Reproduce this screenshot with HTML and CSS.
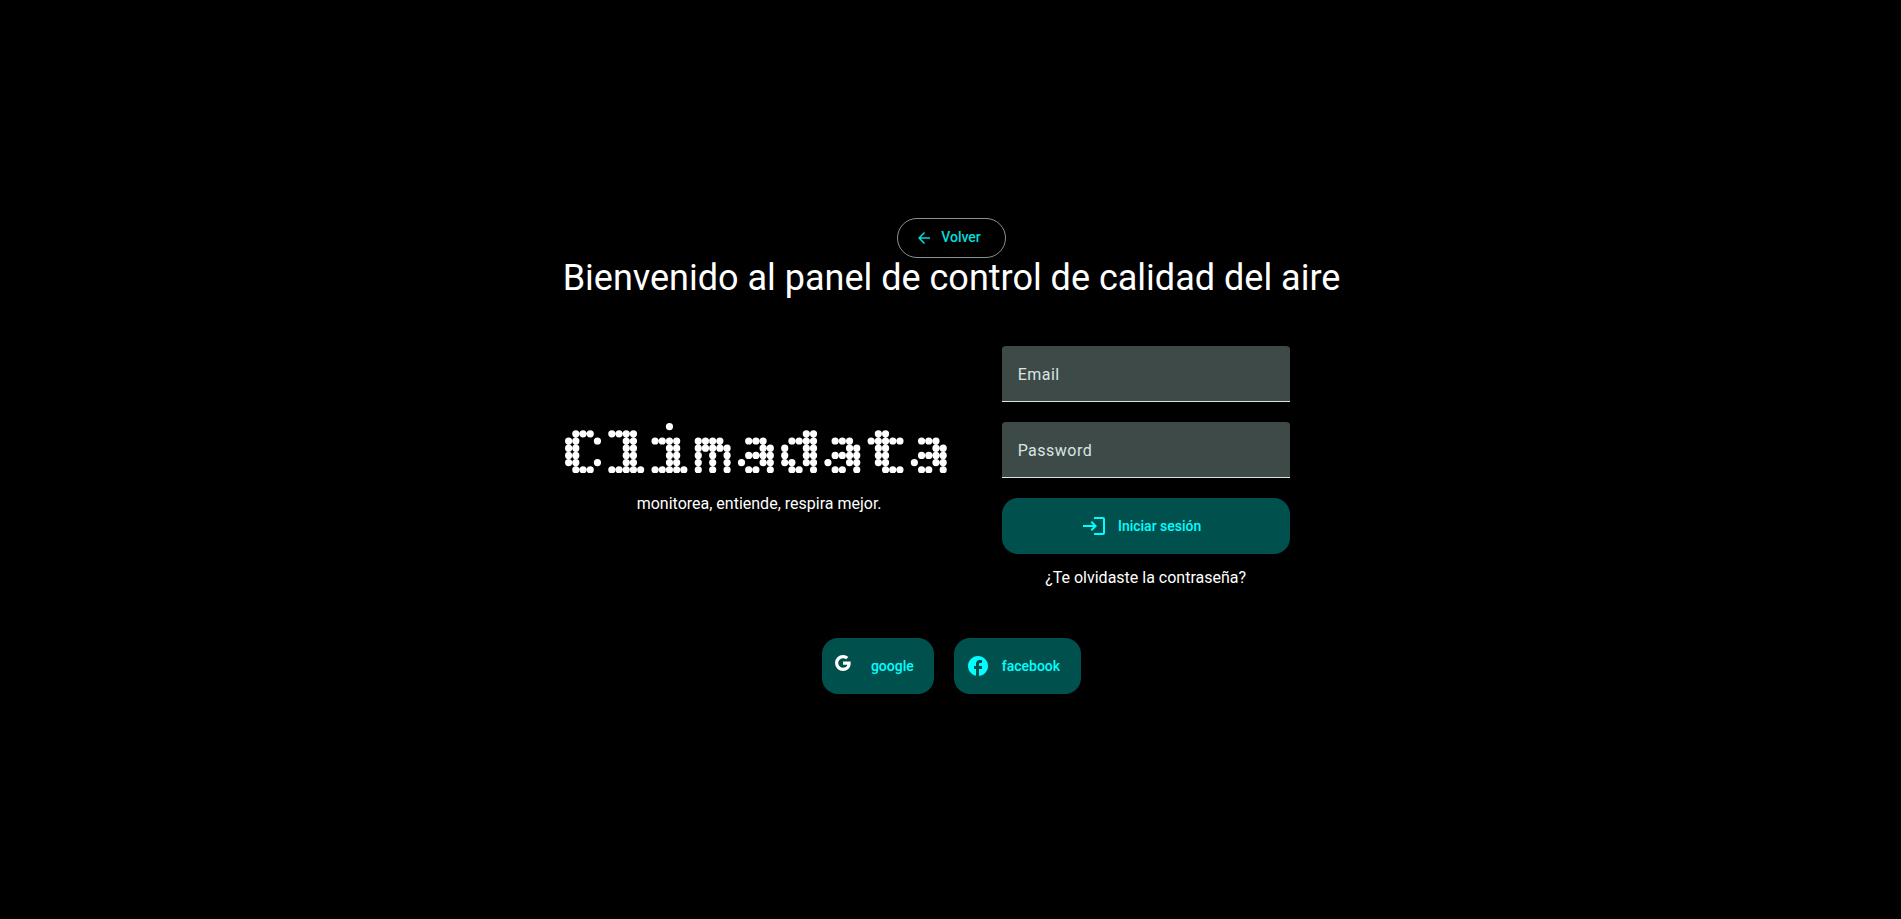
FILE: index.html
```html
<!DOCTYPE html>
<html lang="es">
<head>
<meta charset="utf-8">
<meta name="viewport" content="width=device-width, initial-scale=1">
<title>Climadata</title>
<link rel="stylesheet" href="styles.css">
</head>
<body>
<main class="login">
  <button class="back" type="button">
    <svg class="back-icon" viewBox="0 0 24 24" aria-hidden="true"><path d="M20 11H7.83l5.59-5.59L12 4l-8 8 8 8 1.41-1.41L7.83 13H20v-2z"/></svg>
    Volver
  </button>
  <div class="panel">
    <h1 class="title">Bienvenido al panel de control de calidad del aire</h1>
    <div class="columns">
      <section class="brand">
        <!-- Dot-matrix wordmark: one unit per dot, six columns per letter -->
        <svg class="logo" viewBox="0 0 54 7" role="img" aria-label="Climadata">
          <defs>
            <path id="dot-a" d="M1 2h0m1 0h0m1 0h0M3 3h0m1 0h0M1 4h0m1 0h0m1 0h0m1 0h0M0 5h0m3 0h0m1 0h0M1 6h0m1 0h0m2 0h0"/>
          </defs>
          <g class="dots" transform="translate(.5 .5)">
            <path d="M1 1h0m1 0h0m1 0h0M0 2h0m1 0h0m3 0h0M0 3h0m1 0h0M0 4h0m1 0h0M0 5h0m1 0h0m3 0h0M1 6h0m1 0h0m1 0h0"/>
            <path transform="translate(6)" d="M0 1h0m1 0h0m1 0h0m1 0h0M2 2h0m1 0h0M2 3h0m1 0h0M2 4h0m1 0h0M2 5h0m1 0h0M0 6h0m1 0h0m1 0h0m1 0h0m1 0h0"/>
            <path transform="translate(12)" d="M2 0h0M0 2h0m1 0h0m1 0h0m1 0h0M2 3h0m1 0h0M2 4h0m1 0h0M2 5h0m1 0h0M0 6h0m1 0h0m1 0h0m1 0h0m1 0h0"/>
            <path transform="translate(18)" d="M0 2h0m1 0h0m1 0h0m1 0h0M0 3h0m1 0h0m1 0h0m1 0h0m1 0h0M0 4h0m2 0h0m2 0h0M0 5h0m2 0h0m2 0h0M0 6h0m2 0h0m2 0h0"/>
            <use href="#dot-a" x="24"/>
            <path transform="translate(30)" d="M3 1h0m1 0h0M1 2h0m1 0h0m1 0h0m1 0h0M0 3h0m3 0h0m1 0h0M0 4h0m3 0h0m1 0h0M0 5h0m1 0h0m2 0h0m1 0h0M1 6h0m1 0h0m2 0h0"/>
            <use href="#dot-a" x="36"/>
            <path transform="translate(42)" d="M1 1h0m1 0h0M0 2h0m1 0h0m1 0h0m1 0h0m1 0h0M1 3h0m1 0h0M1 4h0m1 0h0M1 5h0m1 0h0M2 6h0m1 0h0m1 0h0"/>
            <use href="#dot-a" x="48"/>
          </g>
        </svg>
        <p class="tagline">monitorea, entiende, respira mejor.</p>
      </section>
      <form class="form">
        <div class="field">
          <input class="input" id="email" type="email">
          <label class="label" for="email">Email</label>
        </div>
        <div class="field">
          <input class="input" id="password" type="password">
          <label class="label" for="password">Password</label>
        </div>
        <button class="action submit" type="submit">
          <svg class="icon" viewBox="0 0 24 24" aria-hidden="true"><path d="M10 7 8.600 8.400 11.200 11H1v2h10.200l-2.600 2.600L10 17l5-5-5-5zm11 12h-9v2h9c1.100 0 2-.9 2-2V5c0-1.100-.9-2-2-2h-9v2h9v14z"/></svg>
          Iniciar sesión
        </button>
        <a class="forgot" href="#">¿Te olvidaste la contraseña?</a>
      </form>
    </div>
  </div>
  <div class="social">
    <button class="action google" type="button">
      <svg class="google-icon" viewBox="0 0 16 16" aria-hidden="true"><path d="M15.545 6.558a9.420 9.420 0 0 1 .139 1.626c0 2.434-.87 4.492-2.384 5.885h.002C11.978 15.292 10.158 16 8 16A8 8 0 1 1 8 0a7.689 7.689 0 0 1 5.352 2.082l-2.284 2.284A4.347 4.347 0 0 0 8 3.166c-2.087 0-3.860 1.408-4.492 3.304a4.792 4.792 0 0 0 0 3.063h.003c.635 1.893 2.405 3.301 4.492 3.301 1.078 0 2.004-.276 2.722-.764h-.003a3.702 3.702 0 0 0 1.599-2.431H8v-3.080h7.545z"/></svg>
      google
    </button>
    <button class="action" type="button">
      <svg class="icon" viewBox="0 0 24 24" aria-hidden="true"><path d="M22 12c0-5.520-4.480-10-10-10S2 6.480 2 12c0 4.840 3.440 8.870 8 9.800V15H8v-3h2V9.500C10 7.570 11.570 6 13.500 6H16v3h-2c-.55 0-1 .45-1 1v2h3v3h-3v6.950c5.050-.5 9-4.760 9-9.950z"/></svg>
      facebook
    </button>
  </div>
</main>
</body>
</html>
```
FILE: styles.css
```css
* {
  box-sizing: border-box;
}

body {
  margin: 0;
  background: #000;
  color: #fff;
  font: 400 16px/24px Roboto, sans-serif;
}

.login {
  min-height: 100vh;
  padding: 0 0 7px 2px;
  display: flex;
  flex-direction: column;
  align-items: center;
  justify-content: center;
}

button {
  font: 500 14px/20px Roboto, sans-serif;
  cursor: pointer;
}

.back {
  display: flex;
  align-items: center;
  gap: 8px;
  height: 40px;
  padding: 0 24px 2px 17px;
  border: 1px solid #889391;
  border-radius: 20px;
  background: transparent;
  color: #00dddd;
}

.back-icon {
  width: 18px;
  height: 18px;
  margin-top: 2px;
  fill: currentColor;
}

.title {
  margin: 0;
  font-size: 36px;
  font-weight: 400;
  line-height: 40px;
  text-align: center;
}

.columns {
  display: flex;
  align-items: center;
  gap: 48px;
  margin-top: 48px;
  padding-left: 2px;
}

.brand {
  display: flex;
  flex-direction: column;
  align-items: center;
  gap: 19px;
  padding-top: 3px;
}

.logo {
  width: 389px;
  flex-shrink: 0;
}

.dots {
  fill: none;
  stroke: #fff;
  stroke-linecap: round;
  stroke-width: 1;
}

.tagline {
  margin: 0;
}

.form {
  width: 288px;
  display: flex;
  flex-direction: column;
  gap: 20px;
}

.field {
  display: grid;
  align-items: center;
}

.input,
.label {
  grid-area: 1 / 1;
}

.input {
  width: 100%;
  height: 56px;
  padding: 0 16px;
  border: 0;
  border-radius: 4px 4px 0 0;
  background: #3e4a47;
  box-shadow: inset 0 -1px #dae5e3;
  color: #dae5e3;
  font: inherit;
}

.label {
  padding: 2px 16px 0;
  color: #dae5e3;
  letter-spacing: 0.03em;
  pointer-events: none;
}

.action {
  display: flex;
  align-items: center;
  justify-content: center;
  gap: 12px;
  height: 56px;
  padding: 0 21px 0 12px;
  border: 0;
  border-radius: 16px;
  background: #00504e;
  color: #00ffff;
}

.submit {
  padding-right: 20px;
}

.icon {
  width: 24px;
  height: 24px;
  fill: currentColor;
}

.forgot {
  margin-top: -8px;
  color: #fff;
  text-align: center;
  text-decoration: none;
}

.social {
  display: flex;
  gap: 20px;
  margin-top: 48px;
}

.google {
  gap: 20px;
  padding: 0 20px 0 13px;
}

.google-icon {
  width: 16px;
  height: 16px;
  margin-bottom: 6px;
  fill: #fff;
}
```
